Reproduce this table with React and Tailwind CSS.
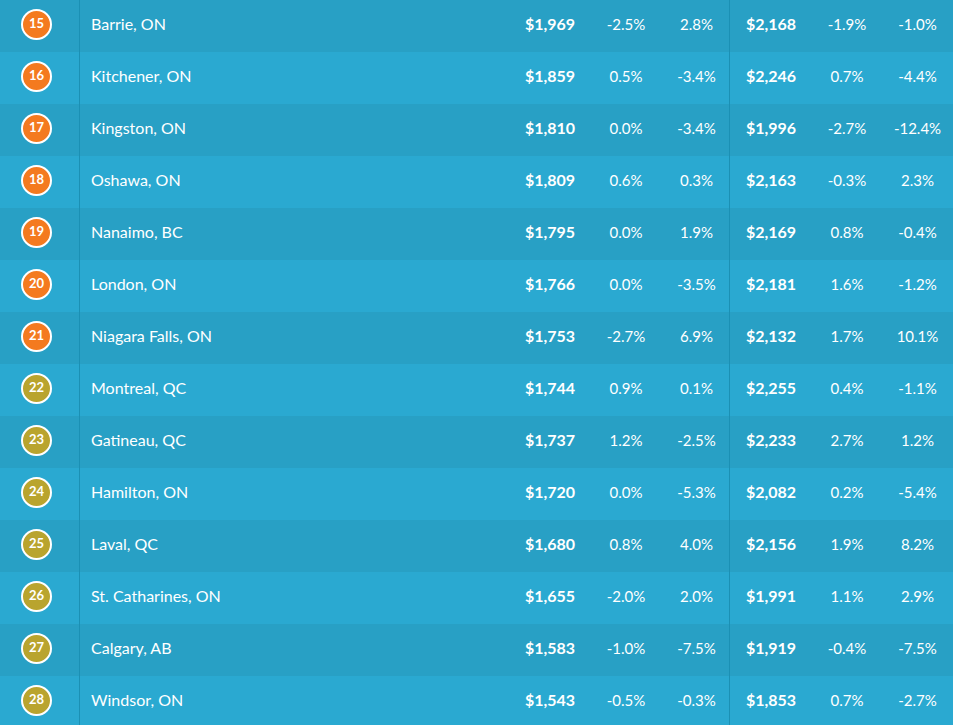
import React from "react";

const rows = [
  [15, "Barrie, ON", "$1,969", "-2.5%", "2.8%", "$2,168", "-1.9%", "-1.0%"],
  [16, "Kitchener, ON", "$1,859", "0.5%", "-3.4%", "$2,246", "0.7%", "-4.4%"],
  [17, "Kingston, ON", "$1,810", "0.0%", "-3.4%", "$1,996", "-2.7%", "-12.4%"],
  [18, "Oshawa, ON", "$1,809", "0.6%", "0.3%", "$2,163", "-0.3%", "2.3%"],
  [19, "Nanaimo, BC", "$1,795", "0.0%", "1.9%", "$2,169", "0.8%", "-0.4%"],
  [20, "London, ON", "$1,766", "0.0%", "-3.5%", "$2,181", "1.6%", "-1.2%"],
  [21, "Niagara Falls, ON", "$1,753", "-2.7%", "6.9%", "$2,132", "1.7%", "10.1%"],
  [22, "Montreal, QC", "$1,744", "0.9%", "0.1%", "$2,255", "0.4%", "-1.1%"],
  [23, "Gatineau, QC", "$1,737", "1.2%", "-2.5%", "$2,233", "2.7%", "1.2%"],
  [24, "Hamilton, ON", "$1,720", "0.0%", "-5.3%", "$2,082", "0.2%", "-5.4%"],
  [25, "Laval, QC", "$1,680", "0.8%", "4.0%", "$2,156", "1.9%", "8.2%"],
  [26, "St. Catharines, ON", "$1,655", "-2.0%", "2.0%", "$1,991", "1.1%", "2.9%"],
  [27, "Calgary, AB", "$1,583", "-1.0%", "-7.5%", "$1,919", "-0.4%", "-7.5%"],
  [28, "Windsor, ON", "$1,543", "-0.5%", "-0.3%", "$1,853", "0.7%", "-2.7%"],
];

export default function App() {
  return (
    <div
      className="w-[953px] h-[725px] overflow-hidden bg-[#2aa9d1] text-white"
      style={{ fontFamily: "Lato, 'Open Sans', sans-serif" }}
    >
      {rows.map((r, i) => {
        const [rank, city, d1, p1, p2, d2, p3, p4] = r;
        const dark = i % 2 === 0;
        const orange = rank <= 21;
        return (
          <div
            key={rank}
            className={`flex h-[52px] items-stretch ${dark ? "bg-[#28a0c5]" : "bg-[#2aa9d1]"}`}
          >
            <div className="w-[80px] shrink-0 border-r border-[#1b90b4] flex items-center justify-center pr-[6px] pb-[4px]">
              <div
                className={`w-[31px] h-[31px] rounded-full border-2 border-white flex items-center justify-center text-[13px] font-bold ${
                  orange ? "bg-[#f47a1f]" : "bg-[#b9a42e]"
                }`}
              >
                {rank}
              </div>
            </div>
            <div className="flex-1 flex items-center pl-[11px] pb-[4px] text-[16px]">{city}</div>
            <div className="w-[76px] shrink-0 flex items-center justify-center pb-[4px] text-[16px] font-bold">{d1}</div>
            <div className="w-[76px] shrink-0 flex items-center justify-center pb-[4px] text-[15px]">{p1}</div>
            <div className="w-[66px] shrink-0 border-r border-[#1b90b4] flex items-center justify-center pb-[4px] text-[15px]">{p2}</div>
            <div className="w-[82px] shrink-0 flex items-center justify-center pb-[4px] text-[16px] font-bold">{d2}</div>
            <div className="w-[70px] shrink-0 flex items-center justify-center pb-[4px] text-[15px]">{p3}</div>
            <div className="w-[71px] shrink-0 flex items-center justify-center pb-[4px] text-[15px]">{p4}</div>
          </div>
        );
      })}
    </div>
  );
}
